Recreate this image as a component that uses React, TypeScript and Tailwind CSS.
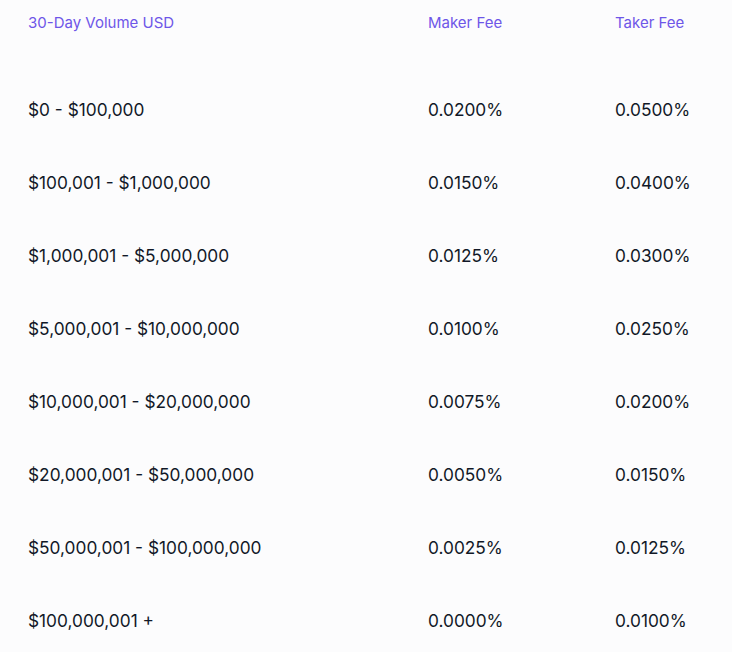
import React from "react";

const rows: [string, string, string][] = [
  ["$0 - $100,000", "0.0200%", "0.0500%"],
  ["$100,001 - $1,000,000", "0.0150%", "0.0400%"],
  ["$1,000,001 - $5,000,000", "0.0125%", "0.0300%"],
  ["$5,000,001 - $10,000,000", "0.0100%", "0.0250%"],
  ["$10,000,001 - $20,000,000", "0.0075%", "0.0200%"],
  ["$20,000,001 - $50,000,000", "0.0050%", "0.0150%"],
  ["$50,000,001 - $100,000,000", "0.0025%", "0.0125%"],
  ["$100,000,001 +", "0.0000%", "0.0100%"],
];

export default function App() {
  return (
    <div
      className="w-[732px] h-[652px] bg-[#fcfcfd] text-[#111827] overflow-hidden"
      style={{ fontFamily: "Inter, 'Noto Sans', sans-serif" }}
    >
      <div className="grid grid-cols-[400px_187px_1fr] pl-[28px] h-[47px] items-center text-[15px] text-[#6e56e8] mb-[26px]">
        <div>30-Day Volume USD</div>
        <div>Maker Fee</div>
        <div>Taker Fee</div>
      </div>
      {rows.map((r) => (
        <div
          key={r[0]}
          className="grid grid-cols-[400px_187px_1fr] pl-[28px] h-[73px] items-center text-[17.3px]"
        >
          <div>{r[0]}</div>
          <div>{r[1]}</div>
          <div>{r[2]}</div>
        </div>
      ))}
    </div>
  );
}
